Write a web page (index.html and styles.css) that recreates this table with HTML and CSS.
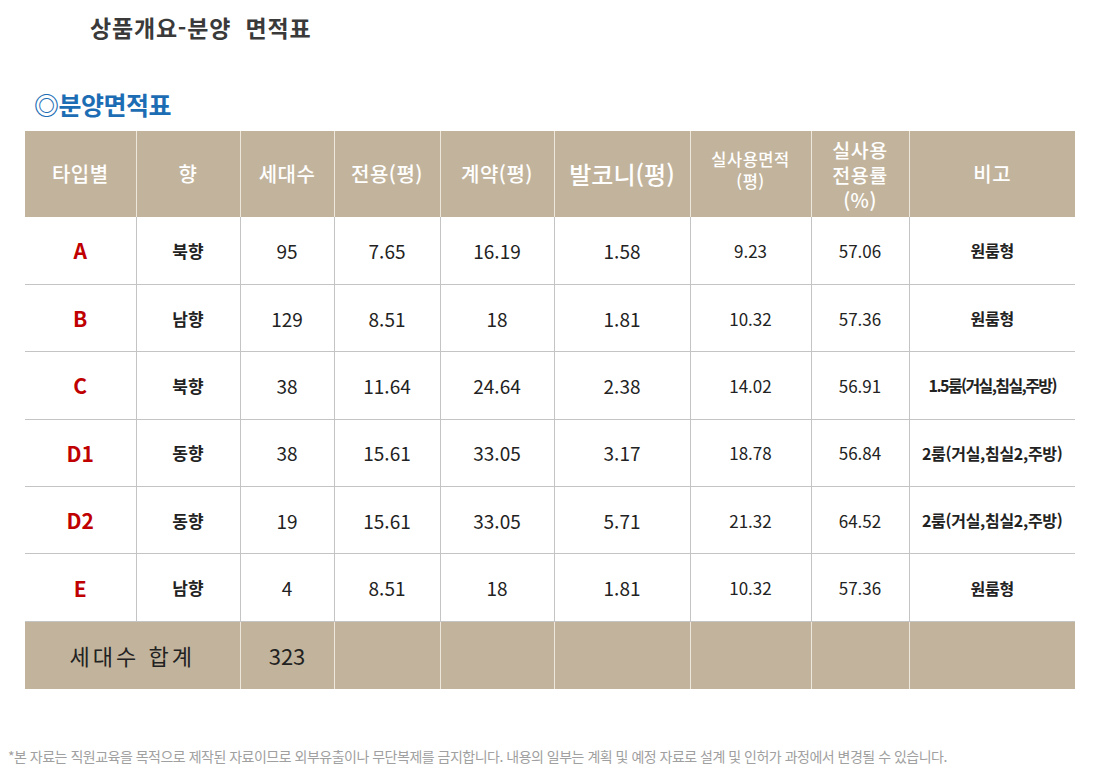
FILE: index.html
```html
<!DOCTYPE html>
<html lang="ko">
<head>
<meta charset="utf-8">
<link rel="stylesheet" href="styles.css">
</head>
<body>
<div class="page">
  <h1 class="title">상품개요-분양&nbsp; 면적표</h1>
  <h2 class="subtitle">◎분양면적표</h2>
  <table class="area">
    <colgroup>
      <col style="width:111px"><col style="width:104px"><col style="width:94px"><col style="width:106px"><col style="width:114px"><col style="width:136px"><col style="width:121px"><col style="width:98px"><col style="width:166px">
    </colgroup>
    <thead>
      <tr>
        <th>타입별</th><th>향</th><th>세대수</th><th>전용(평)</th><th>계약(평)</th><th class="big">발코니(평)</th><th class="small">실사용면적<br>(평)</th><th class="mid">실사용<br>전용률<br>(%)</th><th>비고</th>
      </tr>
    </thead>
    <tbody>
      <tr><td class="type">A</td><td class="dir">북향</td><td>95</td><td>7.65</td><td>16.19</td><td>1.58</td><td class="sm">9.23</td><td class="sm">57.06</td><td class="note">원룸형</td></tr>
      <tr><td class="type">B</td><td class="dir">남향</td><td>129</td><td>8.51</td><td>18</td><td>1.81</td><td class="sm">10.32</td><td class="sm">57.36</td><td class="note">원룸형</td></tr>
      <tr><td class="type">C</td><td class="dir">북향</td><td>38</td><td>11.64</td><td>24.64</td><td>2.38</td><td class="sm">14.02</td><td class="sm">56.91</td><td class="note tight">1.5룸(거실,침실,주방)</td></tr>
      <tr><td class="type">D1</td><td class="dir">동향</td><td>38</td><td>15.61</td><td>33.05</td><td>3.17</td><td class="sm">18.78</td><td class="sm">56.84</td><td class="note">2룸(거실,침실2,주방)</td></tr>
      <tr><td class="type">D2</td><td class="dir">동향</td><td>19</td><td>15.61</td><td>33.05</td><td>5.71</td><td class="sm">21.32</td><td class="sm">64.52</td><td class="note">2룸(거실,침실2,주방)</td></tr>
      <tr><td class="type">E</td><td class="dir">남향</td><td>4</td><td>8.51</td><td>18</td><td>1.81</td><td class="sm">10.32</td><td class="sm">57.36</td><td class="note">원룸형</td></tr>
    </tbody>
    <tfoot>
      <tr><td colspan="2" class="sumlabel">세대수 합계</td><td>323</td><td></td><td></td><td></td><td></td><td></td><td></td></tr>
    </tfoot>
  </table>
  <p class="disclaimer">*본 자료는 직원교육을 목적으로 제작된 자료이므로 외부유출이나 무단복제를 금지합니다. 내용의 일부는 계획 및 예정 자료로 설계 및 인허가 과정에서 변경될 수 있습니다.</p>
</div>
</body>
</html>
```
FILE: styles.css
```css
* { box-sizing: border-box; }
html, body { margin: 0; padding: 0; background: #fff; }
body {
  font-family: "Noto Sans CJK KR", "Noto Sans", sans-serif;
  color: #222;
}
.page {
  width: 1100px;
  height: 771px;
  position: relative;
}
.title {
  margin: 0;
  padding: 10px 0 0 90px;
  font-size: 23px;
  font-weight: 700;
  color: #3a3a3a;
  line-height: 34px;
  letter-spacing: 0.8px;
}
.subtitle {
  margin: 0;
  padding: 44px 0 0 34px;
  font-size: 25px;
  font-weight: 700;
  color: #1c6db4;
  line-height: 33px;
  letter-spacing: -0.5px;
}
.area {
  margin: 10px 0 0 25px;
  width: 1050px;
  border-collapse: collapse;
  table-layout: fixed;
}
.area th {
  background: #c2b49c;
  color: #fff;
  font-weight: 500;
  font-size: 20px;
  height: 86px;
  line-height: 24px;
  padding: 0;
  border-left: 1px solid #ede7dc;
  letter-spacing: 0.5px;
}
.area th:first-child { border-left: none; }
.area th.big { font-size: 24px; letter-spacing: 0; }
.area th.small { font-size: 16.5px; line-height: 22px; padding-bottom: 8px; }
.area th.mid { font-size: 19.5px; line-height: 25px; }
.area td {
  height: 67.4px;
  text-align: center;
  font-size: 19px;
  padding: 0;
  border-left: 1px solid #c4c4c4;
  border-bottom: 1px solid #c4c4c4;
}
.area td:first-child { border-left: none; }
.area td.type { color: #c00000; font-weight: 700; font-size: 21px; }
.area td.dir { font-weight: 700; font-size: 17px; }
.area td.sm { font-size: 17px; }
.area td.note { font-weight: 700; font-size: 16px; letter-spacing: -0.3px; }
.area td.note.tight { letter-spacing: -1.6px; }
.area tfoot td {
  background: #c2b49c;
  border-left: 1px solid #ede7dc;
  border-bottom: none;
  font-size: 22px;
  color: #222;
}
.area tfoot td:first-child { border-left: none; }
.area tfoot td.sumlabel { letter-spacing: 3px; }
.disclaimer {
  margin: 0;
  position: absolute;
  left: 8px;
  top: 746px;
  font-size: 14px;
  color: #a0a0a0;
  letter-spacing: -0.5px;
  line-height: 20px;
}
```
